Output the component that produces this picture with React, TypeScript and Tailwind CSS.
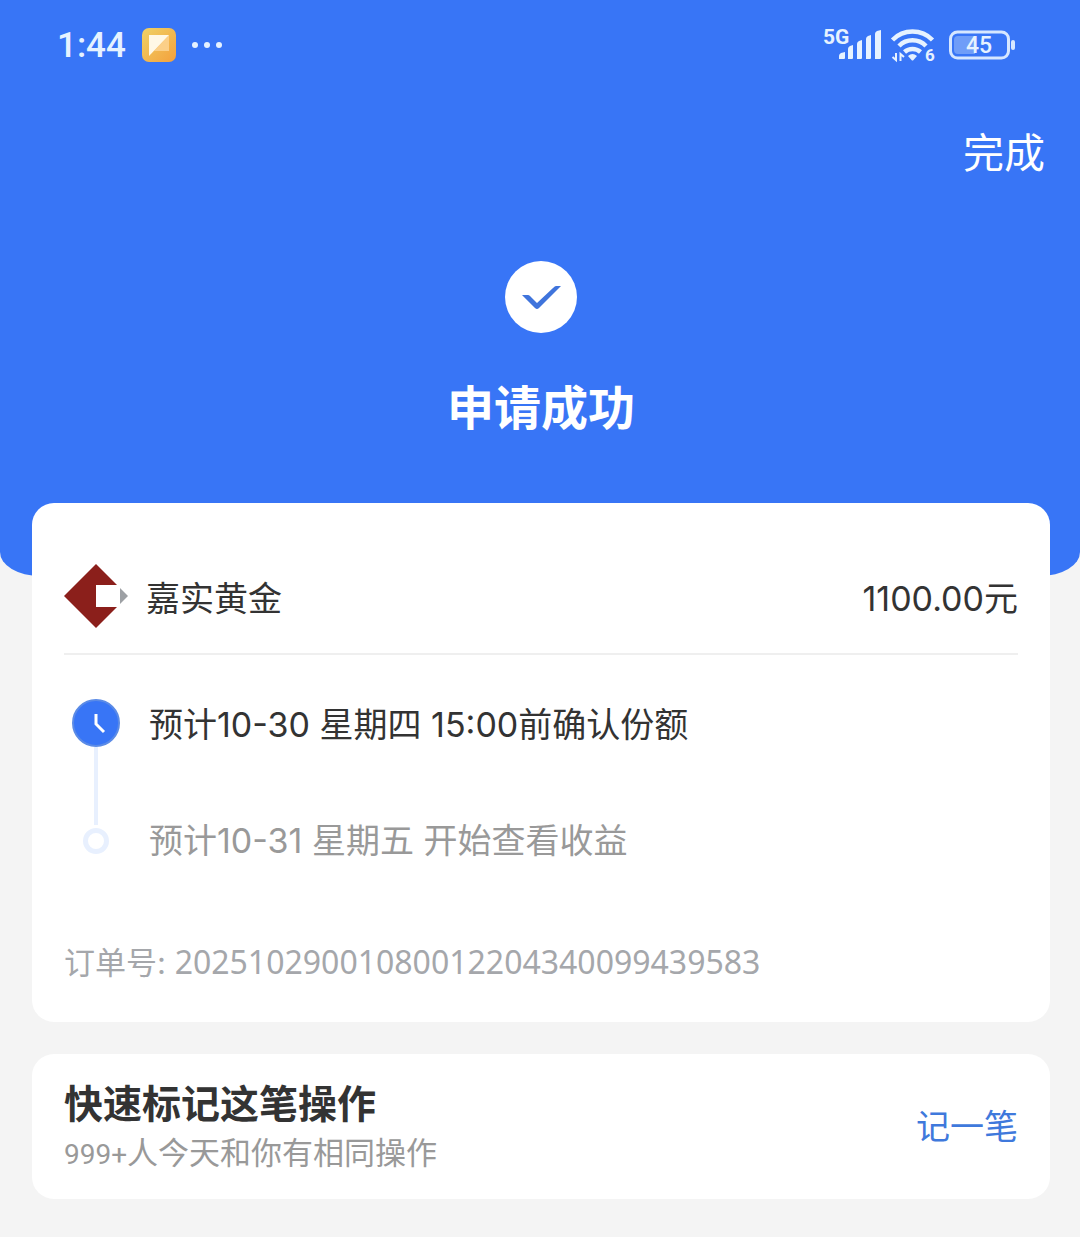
const steps = [
    { text: '预计10-30 星期四 15:00前确认份额', active: true },
    { text: '预计10-31 星期五 开始查看收益', active: false },
];

const SignalIcon = () => (
    <svg width="60" height="44" viewBox="0 -4 60 44" className="font-[Roboto,sans-serif] text-[#e6f2ff]" fill="currentColor" aria-hidden="true">
        <text x="1" y="17" fontSize="21" fontWeight="700">5G</text>
        <path d="M17 32v-3q0-2 2-3l4-1v6q0 1-1 1zM26 32V22q0-2 2-3l3-1v13q0 1-1 1zM35 32V17q0-2 2-3l3-1v18q0 1-1 1zM44 32V12q0-2 2-3l3-1v23q0 1-1 1zM53 32V7q0-2 2-3l4-1v28q0 1-1 1z" />
    </svg>
);

const WifiIcon = () => (
    <svg width="46" height="44" viewBox="0 -4 46 44" className="font-[Roboto,sans-serif] text-[#e6f2ff]" fill="none" stroke="currentColor" strokeWidth="4.5" aria-hidden="true">
        <path d="M2.500 13a28 28 0 0 1 40 0M9 19a19 19 0 0 1 27 0M14.500 25a12 12 0 0 1 16 0" />
        <path d="M18 29q4.500-4 9 0l-3.500 4q-1 1-2 0z" fill="currentColor" stroke="none" />
        <path d="M6 26v7l-3.500-3M10.500 34v-7l3.500 3" strokeWidth="2" />
        <text x="35" y="34" fontSize="17" fontWeight="700" fill="currentColor" stroke="none">6</text>
    </svg>
);

const BatteryIcon = () => (
    <svg width="68" height="32" viewBox="0 0 68 32" className="font-[Roboto,sans-serif]" aria-hidden="true">
        <rect x="2.500" y="3" width="58" height="26" rx="7" fill="none" stroke="#d6e7ff" strokeWidth="3" />
        <path d="M10 7h17v18H10q-4 0-4-4V11q0-4 4-4z" fill="#6f9df8" />
        <rect x="63" y="11" width="4" height="10" rx="2" fill="#d6e7ff" />
        <text x="31" y="24" fontSize="23" fontWeight="500" textAnchor="middle" fill="#e6f2ff">45</text>
    </svg>
);

const NoteAppIcon = () => (
    <svg width="34" height="34" viewBox="0 0 34 34" aria-hidden="true">
        <defs>
            <linearGradient id="note" x1="0" y1="0" x2="1" y2="1">
                <stop offset="0" stopColor="#efd266" />
                <stop offset="1" stopColor="#f4a03c" />
            </linearGradient>
        </defs>
        <rect width="34" height="34" rx="7" fill="url(#note)" />
        <path d="M27 7v16H12z" fill="#fbcf88" />
        <path d="M7 7h20L7 28z" fill="#fff8e6" />
    </svg>
);

const StatusBar = () => (
    <div className="flex h-[90px] items-center justify-between pr-16 pl-[57px]">
        <div className="flex items-center text-[#e6f2ff]">
            <span className="mr-4 font-[Roboto,sans-serif] text-[35px] leading-none font-medium">1:44</span>
            <NoteAppIcon />
            <svg width="32" height="8" viewBox="0 0 32 8" className="ml-4" fill="currentColor" aria-hidden="true">
                <circle cx="3" cy="4" r="3" />
                <circle cx="15" cy="4" r="3" />
                <circle cx="27" cy="4" r="3" />
            </svg>
        </div>
        <div className="flex items-center gap-2">
            <SignalIcon />
            <WifiIcon />
            <span className="ml-1"><BatteryIcon /></span>
        </div>
    </div>
);

const FundLogo = () => (
    <svg width="66" height="66" viewBox="0 0 66 66" aria-hidden="true">
        <path d="M32 1 53 22H32v22h21L32 65 0 33z" fill="#8b1f1b" />
        <path d="M56 25l8 8-8 8z" fill="#9da0a4" />
    </svg>
);

const ClockIcon = () => (
    <svg width="48" height="48" viewBox="0 0 48 48" fill="none" aria-hidden="true">
        <circle cx="24" cy="24" r="23" fill="#3875f6" stroke="#5b8be6" strokeWidth="2" />
        <path d="M24 15v10l8 8" stroke="#fff" strokeWidth="3" />
    </svg>
);

const App = () => {
    return (
        <div className="min-h-screen bg-[#f4f4f4] pb-9 font-[Inter,'Noto_Sans_CJK_SC',sans-serif] text-[#333]">
            <header className="h-[576px] rounded-b-[40px_24px] bg-[#3875f6] text-white">
                <StatusBar />
                <div className="flex justify-end pt-[33px] pr-[35px]">
                    <button type="button" className="text-[41px] leading-[60px]">完成</button>
                </div>
                <div className="flex flex-col items-center pt-[78px] pl-0.5">
                    <svg width="72" height="72" viewBox="0 0 72 72" aria-hidden="true">
                        <circle cx="36" cy="36" r="36" fill="#fff" />
                        <path d="M17 34h6q1 0 2 1l7 7 16-15q2-2 3-2h5L34 47q-2 2-4 0z" fill="#3f74dc" />
                    </svg>
                    <h1 className="mt-10 text-[47px] leading-[70px] font-bold">申请成功</h1>
                </div>
            </header>

            <main className="-mt-[73px] flex flex-col gap-8 pr-[30px] pl-8">
                <section className="rounded-[22px] bg-white px-8 pt-[60px] pb-[39px]">
                    <div className="flex items-center border-b-2 border-[#efefef] pb-6 text-[34px] leading-[60px]">
                        <FundLogo />
                        <span className="ml-4 pt-1.5">嘉实黄金</span>
                        <span className="ml-auto pt-1.5">1100.00元</span>
                    </div>

                    <ol className="mt-11 text-[34px]">
                        {steps.map((step) => (
                            <li key={step.text} className="flex gap-[21px]">
                                {step.active ? (
                                    <>
                                        <div className="flex h-[126px] w-16 flex-col items-center">
                                            <ClockIcon />
                                            <div className="w-1 flex-1 bg-[#e8f0fe]" />
                                        </div>
                                        <span className="leading-[52px]">{step.text}</span>
                                    </>
                                ) : (
                                    <>
                                        <div className="flex w-16 items-center justify-center">
                                            <div className="size-[26px] rounded-full border-[5px] border-[#e8f0fe]" />
                                        </div>
                                        <span className="leading-8 text-[#999]">{step.text}</span>
                                    </>
                                )}
                            </li>
                        ))}
                    </ol>

                    <p className="mt-[86px] text-[31px] leading-10 text-[#a5a7ab]">
                        订单号: <span className="font-['Noto_Sans',sans-serif] text-[32px] leading-none">20251029001080012204340099439583</span>
                    </p>
                </section>

                <section className="flex items-center justify-between rounded-[22px] bg-white px-8 py-6">
                    <div>
                        <h2 className="text-[39px] leading-[52px] font-bold">快速标记这笔操作</h2>
                        <p className="text-[31px] leading-[45px] text-[#999]">
                            <span className="font-[Roboto,sans-serif] text-[28px] leading-none">999+</span>人今天和你有相同操作
                        </p>
                    </div>
                    <button type="button" className="text-[34px] leading-10 text-[#3f79dc]">记一笔</button>
                </section>
            </main>
        </div>
    );
};

export default App;
